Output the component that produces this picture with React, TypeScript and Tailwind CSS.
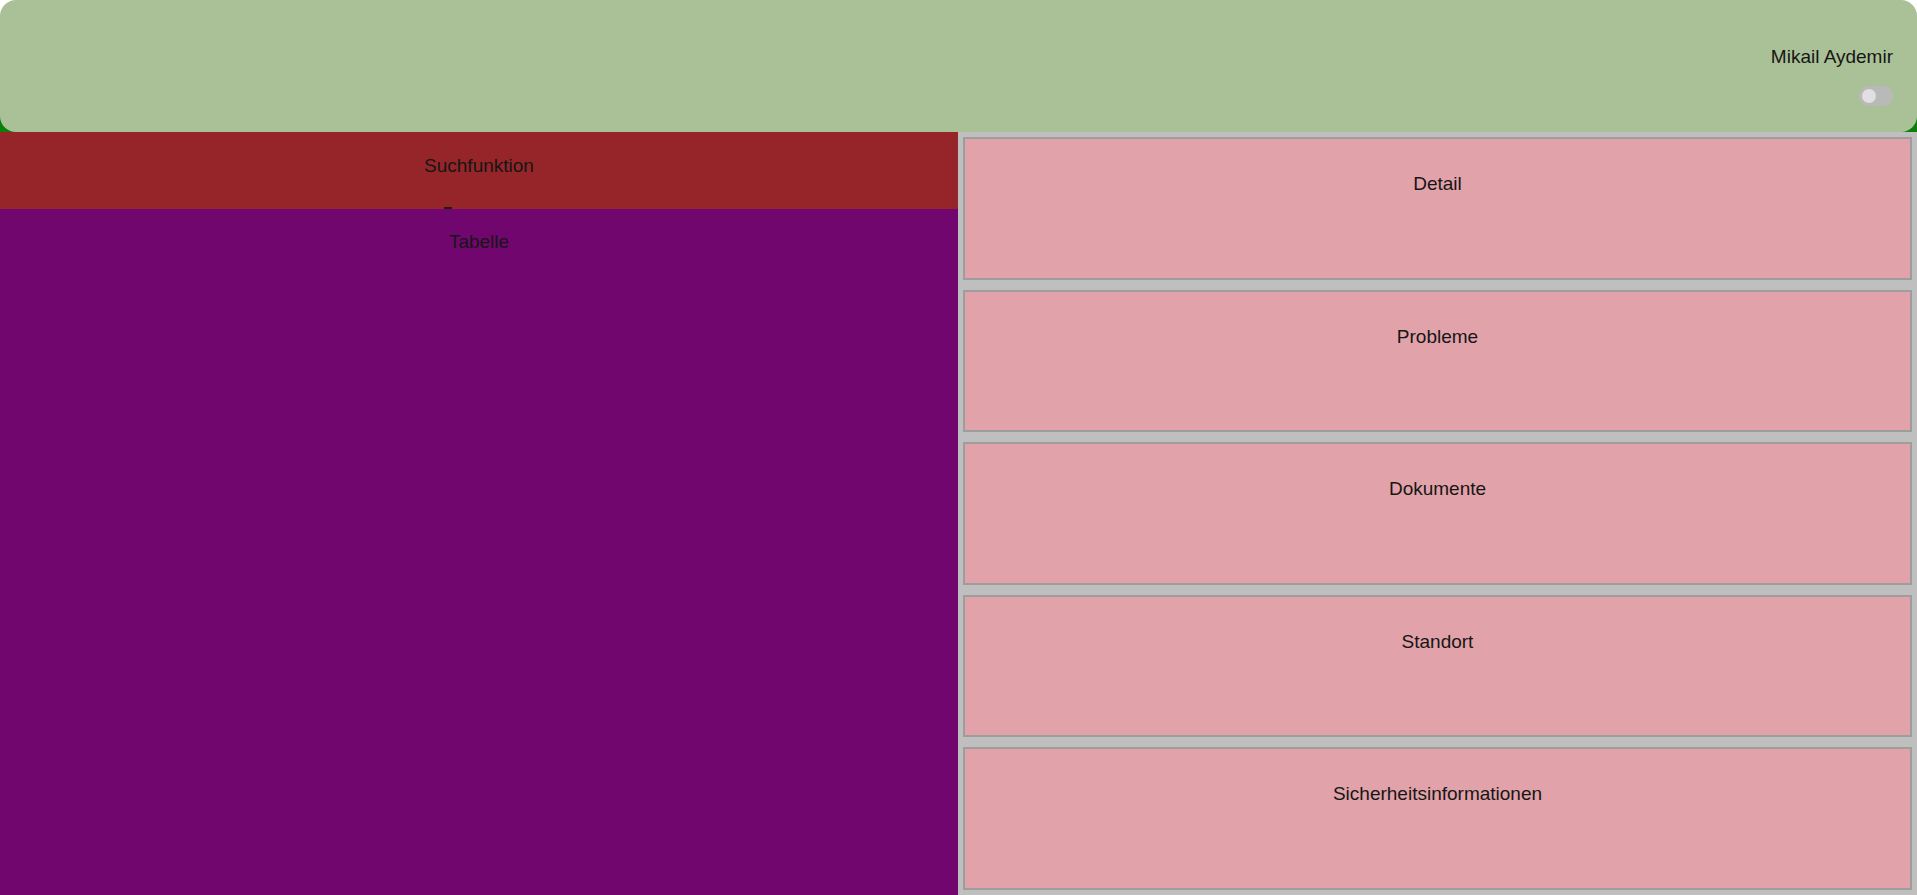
import { useState } from 'react';

const PANELS = ['Detail', 'Probleme', 'Dokumente', 'Standort', 'Sicherheitsinformationen'];

function Toggle() {
  const [on, setOn] = useState(false);
  return (
    <button
      type="button"
      onClick={() => setOn(!on)}
      className={`flex h-[20px] w-[34px] items-center rounded-full px-[3px] ${on ? 'justify-end bg-[#7a9a6a]' : 'justify-start bg-[#b9b9b9]'}`}
    >
      <span className="block h-[14px] w-[14px] rounded-full bg-[#e0e0e0]" />
    </button>
  );
}

export default function App() {
  return (
    <div className="flex h-screen flex-col bg-white font-['Liberation_Sans',Arial,sans-serif] text-[19px] leading-[24px] text-[#161616]">
      {/* Header */}
      <div className="bg-[linear-gradient(to_bottom,#ffffff_50%,#0a800a_50%)]">
        <header className="flex h-[132px] flex-col items-end rounded-2xl bg-[#aac198] pt-[45px] pr-[24px]">
          <span>Mikail Aydemir</span>
          <div className="mt-[17px]">
            <Toggle />
          </div>
        </header>
      </div>

      {/* Main */}
      <div className="flex min-h-0 flex-1">
        {/* Left column */}
        <div className="flex w-[958px] flex-col">
          <section className="relative h-[77px] bg-[#952528] pt-[22px] text-center">
            Suchfunktion
            <span className="absolute bottom-0 left-[444px] h-[2px] w-[8px] rounded-sm bg-[#1a1a1a]" />
          </section>
          <section className="flex-1 bg-[#72066f] pt-[21px] text-center">Tabelle</section>
        </div>

        {/* Right column */}
        <div className="flex flex-1 flex-col bg-[#bfbfbf]">
          {PANELS.map((title) => (
            <div
              key={title}
              className="m-[5px] flex-1 border-2 border-[#9d9d9d] bg-[#e2a2a9] pt-[33px] text-center"
            >
              {title}
            </div>
          ))}
        </div>
      </div>
    </div>
  );
}
